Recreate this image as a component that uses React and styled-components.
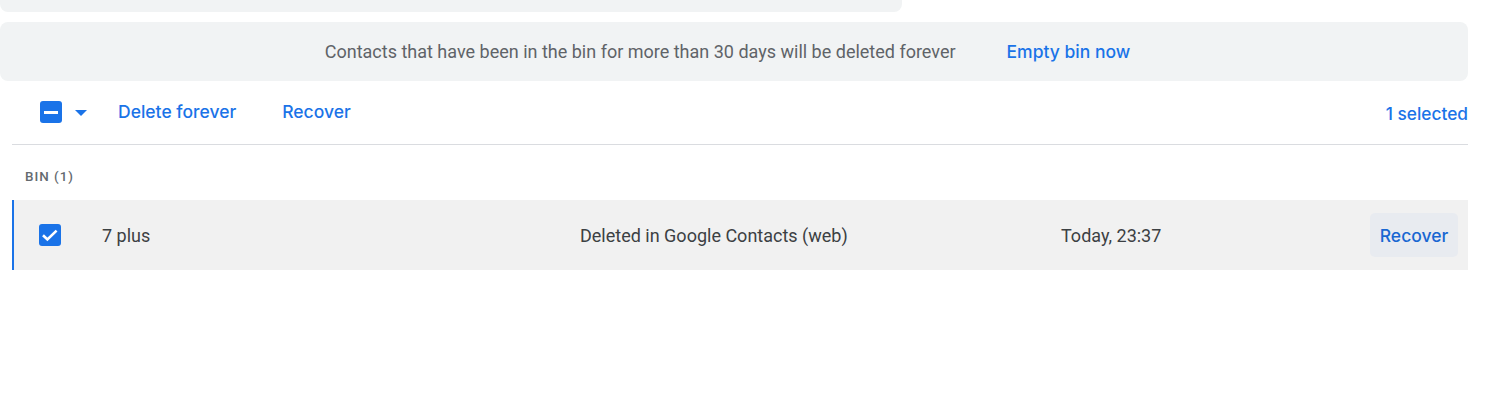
import React from "react";
import styled, { createGlobalStyle } from "styled-components";

const Global = createGlobalStyle`
  html, body { margin: 0; padding: 0; background: #ffffff; }
  body { font-family: Roboto, "Noto Sans", sans-serif; }
`;

const Page = styled.div`
  width: 1468px;
  display: flex;
  flex-direction: column;
`;

const TopCard = styled.div`
  width: 902px;
  height: 12px;
  background: #f1f3f4;
  border-radius: 0 0 8px 8px;
`;

const Banner = styled.div`
  margin-top: 10px;
  height: 59px;
  background: #f1f3f4;
  border-radius: 8px;
  display: flex;
  align-items: center;
  justify-content: center;
  gap: 51px;
  padding-right: 13px;
`;

const BannerText = styled.span`
  font-family: Roboto, sans-serif;
  font-size: 18px;
  color: #5f6368;
`;

const LinkButton = styled.button`
  border: none;
  background: transparent;
  padding: 0;
  margin-left: ${(p) => p.$ml || 0}px;
  font-family: Inter, "Open Sans", sans-serif;
  font-weight: 500;
  font-size: 17.5px;
  color: #1a73e8;
  cursor: pointer;
  line-height: 22px;
`;

const Toolbar = styled.div`
  margin-top: 9px;
  height: 44px;
  display: flex;
  align-items: center;
  padding-left: 40px;
`;

const Spacer = styled.div`
  flex: 1;
`;

const SelectedCount = styled.span`
  font-family: Inter, "Open Sans", sans-serif;
  font-weight: 500;
  font-size: 17.3px;
  color: #1a73e8;
  margin-top: 2px;
`;

const Box = styled.span`
  width: 22px;
  height: 22px;
  border-radius: 3px;
  background: #1a73e8;
  display: inline-flex;
  align-items: center;
  justify-content: center;
  flex: none;
`;

const Caret = styled.span`
  margin-left: 13px;
  width: 0;
  height: 0;
  border-left: 6.5px solid transparent;
  border-right: 6.5px solid transparent;
  border-top: 6.5px solid #1a73e8;
  margin-top: 1px;
`;

const Divider = styled.div`
  margin: 10px 0 0 12px;
  height: 1px;
  background: #dadce0;
`;

const SectionLabel = styled.div`
  margin: 24px 0 0 25px;
  font-family: Roboto, sans-serif;
  font-size: 13.4px;
  font-weight: 500;
  letter-spacing: 1px;
  line-height: 16px;
  color: #646a6f;
`;

const Row = styled.div`
  margin: 15px 0 0 12px;
  height: 70px;
  background: #f1f1f1;
  border-left: 2px solid #1a73e8;
  display: grid;
  grid-template-columns: 63px 478px 481px 1fr auto;
  align-items: center;
  padding-left: 25px;
  padding-right: 10px;
  font-family: Roboto, sans-serif;
  font-size: 18px;
  color: #3c4043;
`;

const Cell = styled.span`
  white-space: nowrap;
`;

const RowButton = styled.button`
  border: none;
  background: #e8ebf0;
  border-radius: 5px;
  width: 88px;
  height: 44px;
  font-family: Inter, "Open Sans", sans-serif;
  font-weight: 500;
  font-size: 17.5px;
  color: #1967d2;
  cursor: pointer;
  padding: 0;
`;

const Minus = () => (
  <svg width="14" height="3" viewBox="0 0 14 3">
    <rect x="0" y="0" width="14" height="3" fill="#fff" />
  </svg>
);

const Check = () => (
  <svg width="22" height="22" viewBox="0 0 22 22">
    <path d="M4 11.2 L8.4 15.4 L17.6 6.6" fill="none" stroke="#fff" strokeWidth="2.6" />
  </svg>
);

export default function App() {
  return (
    <>
      <Global />
      <Page>
        <TopCard />
        <Banner>
          <BannerText>
            Contacts that have been in the bin for more than 30 days will be deleted forever
          </BannerText>
          <LinkButton>Empty bin now</LinkButton>
        </Banner>
        <Toolbar>
          <Box>
            <Minus />
          </Box>
          <Caret />
          <LinkButton $ml={31}>Delete forever</LinkButton>
          <LinkButton $ml={46}>Recover</LinkButton>
          <Spacer />
          <SelectedCount>1 selected</SelectedCount>
        </Toolbar>
        <Divider />
        <SectionLabel>BIN (1)</SectionLabel>
        <Row>
          <Box>
            <Check />
          </Box>
          <Cell>7 plus</Cell>
          <Cell>Deleted in Google Contacts (web)</Cell>
          <Cell>Today, 23:37</Cell>
          <RowButton>Recover</RowButton>
        </Row>
      </Page>
    </>
  );
}
